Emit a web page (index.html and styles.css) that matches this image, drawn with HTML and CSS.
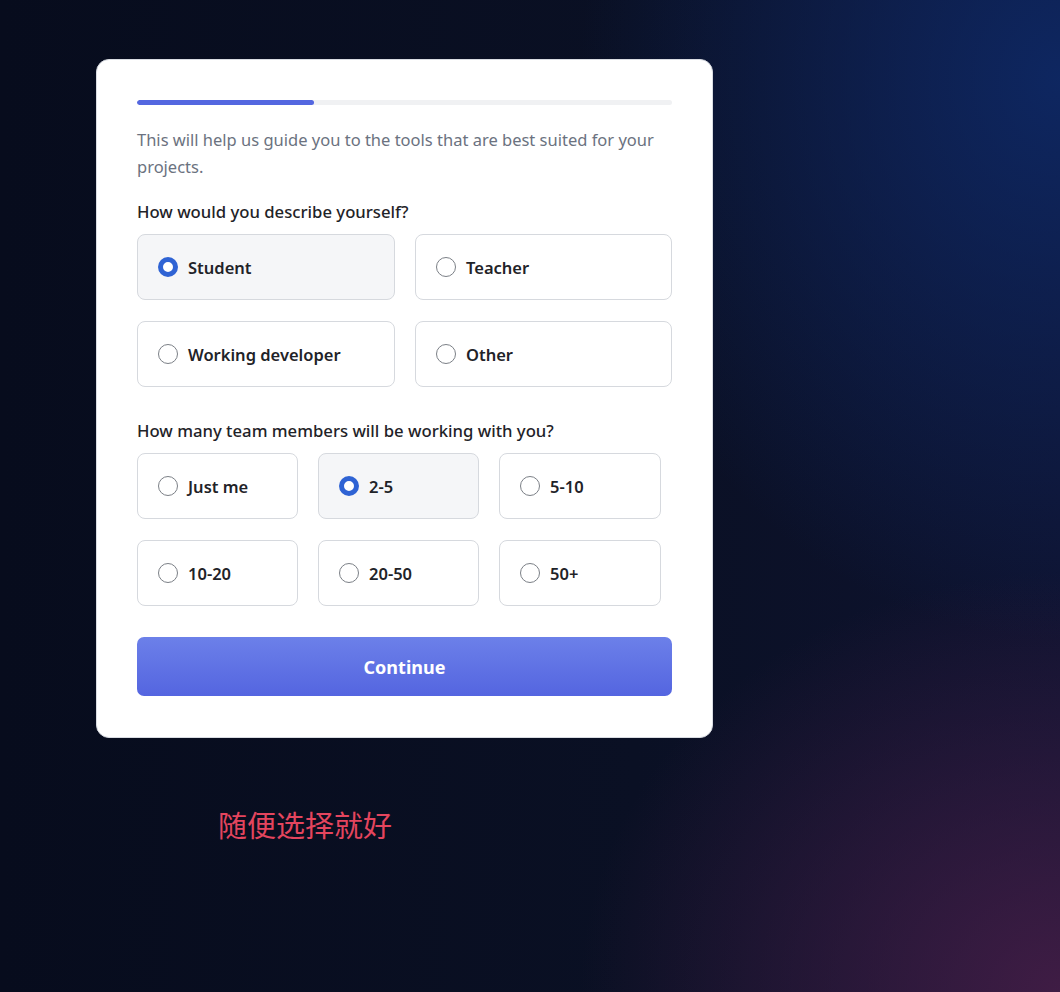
FILE: index.html
```html
<!DOCTYPE html>
<html lang="en">
<head>
<meta charset="utf-8">
<title>Onboarding</title>
<link rel="stylesheet" href="styles.css">
</head>
<body>
<main class="page">
  <section class="card">
    <div class="progress"><div class="progress-fill" style="width:33%"></div></div>
    <p class="intro">This will help us guide you to the tools that are best suited for your projects.</p>

    <h2 class="question">How would you describe yourself?</h2>
    <div class="options two">
      <label class="option selected"><span class="radio"></span><span class="label">Student</span></label>
      <label class="option"><span class="radio"></span><span class="label">Teacher</span></label>
      <label class="option"><span class="radio"></span><span class="label">Working developer</span></label>
      <label class="option"><span class="radio"></span><span class="label">Other</span></label>
    </div>

    <h2 class="question second">How many team members will be working with you?</h2>
    <div class="options three">
      <label class="option"><span class="radio"></span><span class="label">Just me</span></label>
      <label class="option selected"><span class="radio"></span><span class="label">2-5</span></label>
      <label class="option"><span class="radio"></span><span class="label">5-10</span></label>
      <label class="option"><span class="radio"></span><span class="label">10-20</span></label>
      <label class="option"><span class="radio"></span><span class="label">20-50</span></label>
      <label class="option"><span class="radio"></span><span class="label">50+</span></label>
    </div>

    <button class="continue" type="button">Continue</button>
  </section>
  <p class="hint">随便选择就好</p>
</main>
</body>
</html>
```

FILE: styles.css
```css
* { box-sizing: border-box; }
html, body { height: 100%; }
body {
  margin: 0;
  font-family: "Noto Sans", "Open Sans", sans-serif;
  background-color: #090e1f;
  background-image:
    radial-gradient(ellipse 480px 560px at 100% 8%, rgba(14, 42, 105, 0.85), rgba(14, 42, 105, 0) 100%),
    radial-gradient(ellipse 480px 420px at 100% 100%, rgba(72, 30, 72, 0.85), rgba(72, 30, 72, 0) 100%),
    linear-gradient(90deg, #070c1d 0%, #0a1024 60%, #0e1330 100%);
  overflow: hidden;
}
.page {
  padding: 59px 0 0 96px;
}
.card {
  width: 617px;
  background: #ffffff;
  border: 1px solid #d9dce2;
  border-radius: 13px;
  padding: 40px 40px 41px;
}
.progress {
  height: 5px;
  background: #f0f1f3;
  border-radius: 3px;
  overflow: hidden;
}
.progress-fill {
  height: 100%;
  background: #5467e0;
  border-radius: 3px;
}
.intro {
  margin: 21px 0 0;
  font-size: 16.5px;
  line-height: 27px;
  color: #6b7280;
}
.question {
  margin: 20px 0 0;
  font-size: 16.7px;
  line-height: 24px;
  font-weight: 500;
  color: #1f2328;
}
.question.second { margin-top: 32px; }
.options {
  display: grid;
  margin-top: 10px;
  column-gap: 20px;
  row-gap: 21px;
}
.options.two { grid-template-columns: 258px 257px; }
.options.three { grid-template-columns: 161px 161px 162px; }
.option {
  display: flex;
  align-items: center;
  height: 66px;
  padding-left: 20px;
  border: 1px solid #d6d9de;
  border-radius: 8px;
  background: #ffffff;
}
.option.selected { background: #f5f6f8; }
.radio {
  width: 20px;
  height: 20px;
  border-radius: 50%;
  border: 1px solid #7b7f86;
  background: #fff;
  flex: none;
}
.option.selected .radio {
  border: 5px solid #2f63d4;
}
.label {
  margin-left: 10px;
  font-size: 16.5px;
  font-weight: 600;
  color: #1f2328;
}
.continue {
  display: block;
  width: 100%;
  height: 59px;
  margin-top: 31px;
  border: none;
  border-radius: 7px;
  background: linear-gradient(180deg, #6c80e9 0%, #5465e0 100%);
  color: #ffffff;
  font-family: inherit;
  font-size: 18px;
  font-weight: 700;
  cursor: pointer;
}
.hint {
  margin: 66px 0 0 122px;
  font-family: "Noto Sans CJK SC", sans-serif;
  font-size: 29px;
  line-height: 40px;
  color: #e4455e;
}
```
